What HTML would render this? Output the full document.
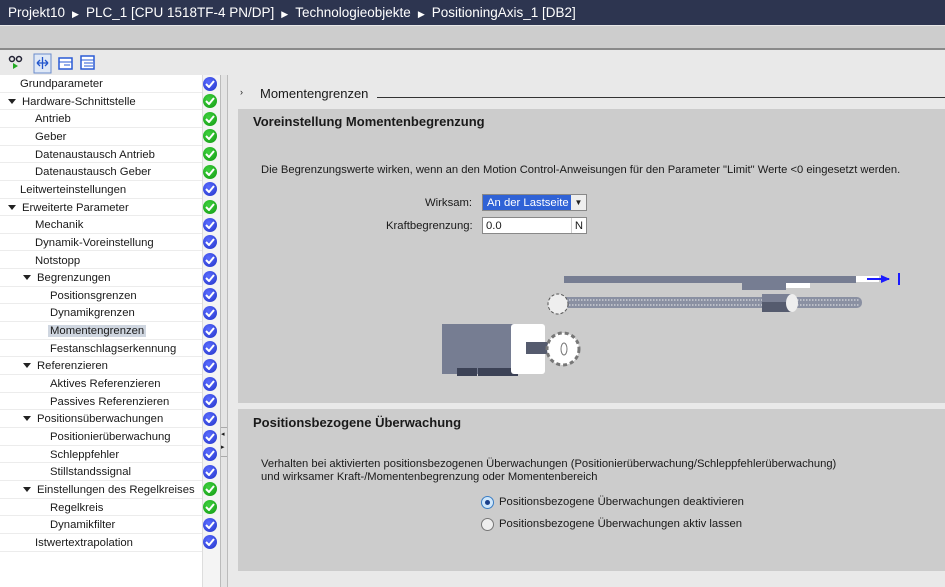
<!DOCTYPE html>
<html><head><meta charset="utf-8"><style>
*{margin:0;padding:0;box-sizing:border-box}
body{width:945px;height:587px;overflow:hidden;background:#e9e9e9;font-family:"Liberation Sans",sans-serif;font-size:11.3px;color:#1a1a1a;position:relative}
.abs{position:absolute}
#title{left:0;top:0;width:945px;height:25px;background:#2d3550;color:#fff;font-size:13.5px;line-height:25px;padding-left:8px;white-space:nowrap}
#title b{font-weight:normal;font-size:9px;margin:0 7px}
#bar{left:0;top:25px;width:945px;height:25px;background:#cdcdcd;border-top:1px solid #e8e8e8;border-bottom:2px solid #8a8a8a}
#tb{left:0;top:51px;width:228px;height:24px;background:#e9e9e9}
#tree{left:0;top:75px;width:202px;height:512px;background:#fff}
#icol{left:202px;top:75px;width:18px;height:512px;background:#f4f4f4;border-left:1px solid #ddd}
#split{left:220px;top:75px;width:8px;height:512px;background:#e4e4e4;border-left:1px solid #bbb;border-right:1px solid #bbb}
.row{position:absolute;left:0;width:202px;height:17.65px;line-height:19px;border-bottom:1px solid #ececec;white-space:nowrap}
.ic{position:absolute;left:203px;width:14px;height:14px;border-radius:50%}
.ic svg{position:absolute;left:2px;top:3px}
.b{background:radial-gradient(circle at 40% 35%,#5a6cff,#2233c8)}
.g{background:radial-gradient(circle at 40% 35%,#3fd13f,#119911)}
.tri{display:inline-block;width:0;height:0;border-left:4px solid transparent;border-right:4px solid transparent;border-top:5px solid #222;margin-right:6px;vertical-align:1px}
.sec{position:absolute;left:238px;width:707px;background:#cccccc}
.h{font-weight:bold;font-size:13px;position:absolute;left:15px}
</style></head><body>
<div id="title" class="abs">Projekt10<b>▶</b>PLC_1 [CPU 1518TF-4 PN/DP]<b>▶</b>Technologieobjekte<b>▶</b>PositioningAxis_1 [DB2]</div>
<div id="bar" class="abs"></div>
<div id="tb" class="abs">
<svg width="110" height="24" style="position:absolute;left:8px;top:2px">
<circle cx="4" cy="6" r="2.5" fill="none" stroke="#223" stroke-width="1.5"/><circle cx="11" cy="6" r="2.5" fill="none" stroke="#223" stroke-width="1.5"/><polygon points="5,10 10,13 5,16" fill="#2a2"/>
<rect x="26" y="1" width="17" height="19" fill="#dfe8f6" stroke="#6a8ccc"/><path d="M29 10h11M29 10l3-3M29 10l3 3M40 10l-3-3M40 10l-3 3M34.5 4v12" stroke="#2255cc" stroke-width="1.3" fill="none"/>
<rect x="51" y="5" width="13" height="11" fill="#fff" stroke="#2a5bd6" stroke-width="1.5"/><path d="M51 9h13M56 12h6" stroke="#2a5bd6"/>
<rect x="73" y="3" width="13" height="13" fill="#fff" stroke="#2a5bd6" stroke-width="1.5"/><path d="M73 7h13M76 10h9M76 13h9" stroke="#2a5bd6"/>
</svg></div>
<div id="tree" class="abs"></div>
<div id="icol" class="abs"></div>
<div id="split" class="abs"><div class="abs" style="left:0;top:352px;width:6px;height:30px;border-top:1px solid #aaa;border-bottom:1px solid #aaa;font-size:7px;line-height:13px">◂<br>▸</div></div>
<div id="rows"></div>
<script>
var r=[["Grundparameter",20,"b"],["▾Hardware-Schnittstelle",8,"g"],["Antrieb",35,"g"],["Geber",35,"g"],["Datenaustausch Antrieb",35,"g"],["Datenaustausch Geber",35,"g"],["Leitwerteinstellungen",20,"b"],["▾Erweiterte Parameter",8,"g"],["Mechanik",35,"b"],["Dynamik-Voreinstellung",35,"b"],["Notstopp",35,"b"],["▾Begrenzungen",23,"b"],["Positionsgrenzen",50,"b"],["Dynamikgrenzen",50,"b"],["Momentengrenzen",50,"b"],["Festanschlagserkennung",50,"b"],["▾Referenzieren",23,"b"],["Aktives Referenzieren",50,"b"],["Passives Referenzieren",50,"b"],["▾Positionsüberwachungen",23,"b"],["Positionierüberwachung",50,"b"],["Schleppfehler",50,"b"],["Stillstandssignal",50,"b"],["▾Einstellungen des Regelkreises",23,"g"],["Regelkreis",50,"g"],["Dynamikfilter",50,"b"],["Istwertextrapolation",35,"b"]];
var h="";r.forEach(function(e,i){var y=75+i*17.65;var t=e[0],tri="";if(t[0]=="▾"){t=t.slice(1);tri='<span class="tri"></span>';}
var sel=t=="Momentengrenzen"?'background:#cfd6e0;padding:0 2px;margin-left:-2px;':'';
h+='<div class="row" style="top:'+y+'px;padding-left:'+e[1]+'px"><span style="'+sel+'">'+tri+t+'</span></div>';
h+='<div class="ic '+e[2]+'" style="top:'+(y+1.5)+'px"><svg width="10" height="8"><path d="M1 4l3 3 5-6" stroke="#fff" stroke-width="2" fill="none"/></svg></div>';});
document.getElementById("rows").innerHTML=h;
</script>
<div class="abs" style="left:240px;top:87px;font-size:9px">›</div>
<div class="abs" style="left:260px;top:86px;font-size:13px">Momentengrenzen</div>
<div class="abs" style="left:377px;top:97px;width:568px;border-top:1px solid #333"></div>
<div class="sec" style="top:109px;height:294px">
<div class="h" style="top:5px">Voreinstellung Momentenbegrenzung</div>
<div class="abs" style="left:23px;top:55px;white-space:nowrap;font-size:11.2px">Die Begrenzungswerte wirken, wenn an den Motion Control-Anweisungen für den Parameter "Limit" Werte &lt;0 eingesetzt werden.</div>
<div class="abs" style="left:187px;top:88px">Wirksam:</div>
<div class="abs" style="left:244px;top:85px;width:105px;height:17px;background:#2f62d6;color:#fff;border:1px solid #888;line-height:16px;padding-left:4px">An der Lastseite<span class="abs" style="right:0;top:0;width:15px;height:15px;background:#eee;color:#222;font-size:8px;text-align:center">▼</span></div>
<div class="abs" style="left:148px;top:111px">Kraftbegrenzung:</div>
<div class="abs" style="left:244px;top:108px;width:105px;height:17px;background:#fff;border:1px solid #888;line-height:16px;padding-left:3px">0.0<span class="abs" style="right:0;top:0;width:15px;height:15px;border-left:1px solid #ccc;text-align:center">N</span></div>
<svg class="abs" style="left:180px;top:155px" width="490" height="120">
<rect x="146" y="12" width="292" height="7" fill="#767d92"/><rect x="438" y="12" width="23" height="6" fill="#fff"/>
<path d="M449 15h22" stroke="#1a1aff" stroke-width="2"/><polygon points="463,11 472,15 463,19" fill="#1a1aff"/><rect x="480" y="9" width="2" height="12" fill="#1a1aff"/>
<rect x="324" y="19" width="44" height="7" fill="#767d92"/><rect x="368" y="19" width="24" height="5" fill="#fff"/>
<rect x="140" y="33" width="304" height="11" rx="5" fill="#8a90a2"/><path d="M142 36h300M142 41h300" stroke="#eee" stroke-dasharray="1.5 1.5"/>
<rect x="344" y="30" width="30" height="18" fill="#555b6e"/><rect x="344" y="30" width="30" height="8" fill="#7a8094"/><ellipse cx="374" cy="39" rx="6" ry="9" fill="#eee"/>
<circle cx="140" cy="40" r="10" fill="#eee" stroke="#555" stroke-dasharray="3 2"/>
<rect x="24" y="60" width="75" height="50" fill="#767d92"/><rect x="60" y="104" width="40" height="8" fill="#3c4256"/><rect x="39" y="104" width="20" height="8" fill="#3c4256"/>
<rect x="93" y="60" width="34" height="50" rx="3" fill="#fff"/><rect x="108" y="78" width="25" height="12" fill="#555b6e"/>
<circle cx="145" cy="85" r="16" fill="#fff" stroke="#777" stroke-width="3" stroke-dasharray="4 3"/><circle cx="145" cy="85" r="12" fill="#fff"/><ellipse cx="146" cy="85" rx="3" ry="6" fill="none" stroke="#777"/>
</svg>
</div>
<div class="sec" style="top:409px;height:162px">
<div class="h" style="top:6px">Positionsbezogene Überwachung</div>
<div class="abs" style="left:23px;top:49px;white-space:nowrap;line-height:13px;font-size:11.2px">Verhalten bei aktivierten positionsbezogenen Überwachungen (Positionierüberwachung/Schleppfehlerüberwachung)<br>und wirksamer Kraft-/Momentenbegrenzung oder Momentenbereich</div>
<div class="abs" style="left:243px;top:87px;width:13px;height:13px;border-radius:50%;border:1px solid #3a7dc4;background:#cfe6fa"><div class="abs" style="left:3px;top:3px;width:5px;height:5px;border-radius:50%;background:#1a3f8a"></div></div>
<div class="abs" style="left:261px;top:87px">Positionsbezogene Überwachungen deaktivieren</div>
<div class="abs" style="left:243px;top:109px;width:13px;height:13px;border-radius:50%;border:1px solid #777;background:#eee"></div>
<div class="abs" style="left:261px;top:109px">Positionsbezogene Überwachungen aktiv lassen</div>
</div>
</body></html>
